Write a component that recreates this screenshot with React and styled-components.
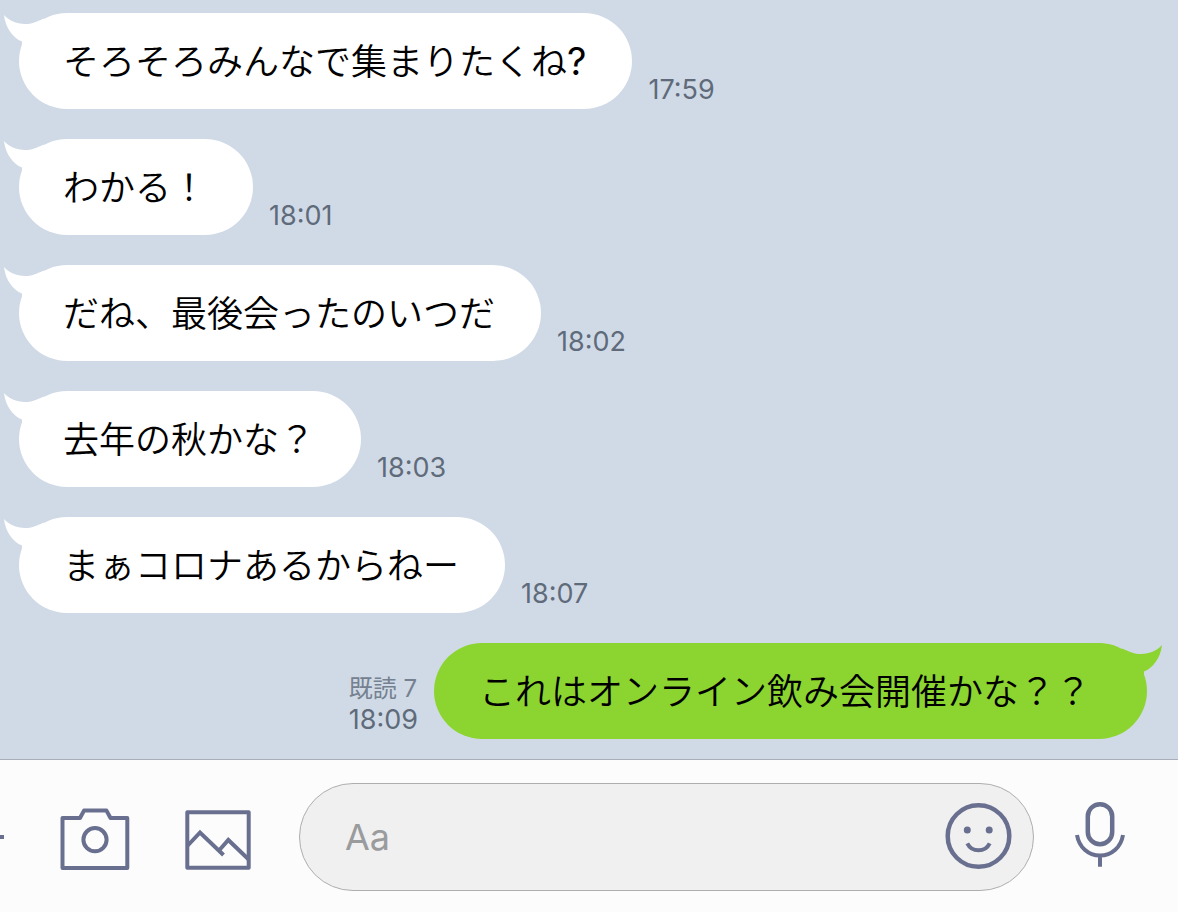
import React from "react";
import styled, { createGlobalStyle } from "styled-components";

const GlobalStyle = createGlobalStyle`
  *, *::before, *::after { box-sizing: border-box; }
  html { overflow: hidden auto; }
  body {
    margin: 0;
    background: #d0dae6;
    font-family: Inter, "Noto Sans CJK JP", sans-serif;
    color: #000;
  }
`;

const Page = styled.main`
  display: flex;
  flex-direction: column;
  min-height: 100vh;
`;

const Thread = styled.ol`
  flex: 1;
  display: flex;
  flex-direction: column;
  gap: 30px;
  margin: 0;
  padding: 13px 31px 19px 19px;
  list-style: none;
`;

const Message = styled.li`
  display: flex;
  flex-direction: ${(p) => (p.$sent ? "row-reverse" : "row")};
  align-items: flex-end;
  gap: 16px;
`;

const Bubble = styled.p`
  position: relative;
  margin: 0;
  padding: ${(p) => (p.$sent ? "18px 56px 22px 45px" : "18px 46px 22px 44px")};
  border-radius: 48px;
  background: ${(p) => (p.$sent ? "#8cd42f" : "#fff")};
  font-family: "Noto Sans CJK JP", sans-serif;
  font-size: 36px;
  font-weight: 350;
  line-height: 56px;
`;

const TailShape = styled.svg`
  position: absolute;
  top: 0;
  ${(p) => (p.$sent ? "right: -15px; transform: scaleX(-1);" : "left: -15px;")}
  width: 44px;
  height: 36px;
  fill: ${(p) => (p.$sent ? "#8cd42f" : "#fff")};
`;

const LatinMark = styled.span`
  font-family: Inter, sans-serif;
  font-size: 38px;
  font-weight: 400;
  line-height: 1;
`;

const Meta = styled.div`
  display: flex;
  flex-direction: column;
  padding-bottom: 3px;
  color: #5f6b7a;
  font-size: 27px;
  line-height: 32px;
`;

const ReadCount = styled.span`
  color: #758190;
  font-size: 24px;
  line-height: 30px;
`;

const Composer = styled.form`
  display: flex;
  align-items: center;
  padding: 23px 52px 21px 0;
  border-top: 1px solid #a9aeb8;
  background: #fcfcfc;
`;

const IconButton = styled.button`
  flex: none;
  display: block;
  margin: 0 ${(p) => p.$after || 0}px 0 0;
  padding: 0;
  border: 0;
  background: none;
  cursor: pointer;

  svg {
    display: block;
    fill: none;
    stroke: #69708f;
    stroke-width: 4;
    stroke-linejoin: round;
  }
`;

const Field = styled.div`
  flex: 1;
  min-width: 0;
  display: flex;
  align-items: center;
  height: 108px;
  margin-right: 40px;
  padding: 0 19px 0 45px;
  border: 1px solid #aeaeb0;
  border-radius: 54px;
  background: #f0f0f0;
`;

const TextInput = styled.input`
  flex: 1;
  min-width: 0;
  padding: 0;
  border: 0;
  outline: 0;
  background: none;
  color: #000;
  font-family: Inter, "Noto Sans CJK JP", sans-serif;
  font-size: 36px;
  line-height: 48px;

  &::placeholder {
    color: #9a9b9d;
    opacity: 1;
  }
`;

const messages = [
  { text: "そろそろみんなで集まりたくね", mark: "?", time: "17:59" },
  { text: "わかる！", time: "18:01" },
  { text: "だね、最後会ったのいつだ", time: "18:02" },
  { text: "去年の秋かな？", time: "18:03" },
  { text: "まぁコロナあるからねー", time: "18:07" },
  { text: "これはオンライン飲み会開催かな？？", time: "18:09", sent: true, read: 7 },
];

function Tail({ sent }) {
  return (
    <TailShape $sent={sent} viewBox="0 0 44 36" aria-hidden="true">
      <path d="M0 2C5 7.500 12 11 21 11C28 11 32 9 40 5.500L40 34L18 34L18 28.500C9 25 1.500 15 0 2Z" />
    </TailShape>
  );
}

function ChatMessage({ text, mark, time, sent, read }) {
  return (
    <Message $sent={sent}>
      <Bubble $sent={sent}>
        <Tail sent={sent} />
        {text}
        {mark && <LatinMark>{mark}</LatinMark>}
      </Bubble>
      <Meta>
        {read && <ReadCount>既読 {read}</ReadCount>}
        <time dateTime={time}>{time}</time>
      </Meta>
    </Message>
  );
}

export default function App() {
  return (
    <Page>
      <GlobalStyle />
      <Thread>
        {messages.map((m) => (
          <ChatMessage key={m.time} {...m} />
        ))}
      </Thread>
      <Composer onSubmit={(e) => e.preventDefault()}>
        <IconButton type="button" aria-label="メニュー" $after={56}>
          <svg width="4" height="72" viewBox="0 0 4 72">
            <path d="M0 36H4" />
          </svg>
        </IconButton>
        <IconButton type="button" aria-label="カメラ" $after={54}>
          <svg width="70" height="72" viewBox="0 0 70 72">
            <path d="M2.500 17H20L24 9.600H46.500L50.500 17H67.300V67H2.500Z" />
            <circle cx="35" cy="38.700" r="11.600" />
          </svg>
        </IconButton>
        <IconButton type="button" aria-label="写真" $after={47}>
          <svg width="68" height="72" viewBox="0 0 68 72">
            <path d="M3.300 11.300H64.700V66.800H3.300Z" />
            <path strokeLinejoin="miter" d="M3.300 45L16 31.500L39.500 54M35 49.500L44.300 39L64.700 58.500" />
          </svg>
        </IconButton>
        <Field>
          <TextInput type="text" placeholder="Aa" aria-label="メッセージを入力" />
          <IconButton type="button" aria-label="スタンプ">
            <svg width="72" height="72" viewBox="0 0 72 72">
              <circle cx="36.500" cy="35" r="30.800" strokeWidth="4.500" />
              <g fill="#69708f" stroke="none">
                <circle cx="25.300" cy="29" r="3.500" />
                <circle cx="47.200" cy="29" r="3.500" />
              </g>
              <path d="M25.300 42.300A12.500 12.500 0 0 0 47.700 42.300" />
            </svg>
          </IconButton>
        </Field>
        <IconButton type="button" aria-label="音声メッセージ">
          <svg width="52" height="72" viewBox="0 0 52 72">
            <rect x="13.800" y="3.200" width="24.400" height="40" rx="12.200" strokeWidth="4.500" />
            <path d="M3 34C5 46 14 54.500 26 54.500S47 46 49 34M26 54.500V65.700" />
          </svg>
        </IconButton>
      </Composer>
    </Page>
  );
}
